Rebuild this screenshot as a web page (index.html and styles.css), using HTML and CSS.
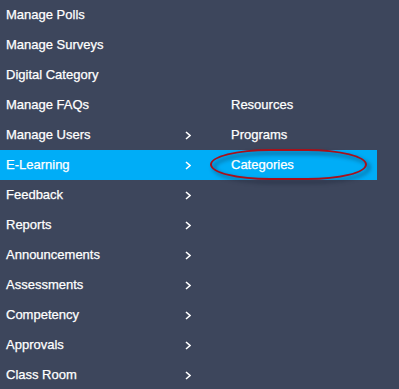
FILE: index.html
```html
<!DOCTYPE html>
<html>
<head>
<meta charset="utf-8">
<link rel="stylesheet" href="styles.css">
</head>
<body>
<div class="nav">
  <ul class="menu">
    <li class="item"><span>Manage Polls</span></li>
    <li class="item"><span>Manage Surveys</span></li>
    <li class="item"><span>Digital Category</span></li>
    <li class="item"><span>Manage FAQs</span></li>
    <li class="item"><span>Manage Users</span><svg class="chev" viewBox="0 0 6 9"><path d="M1 1 L5 4.5 L1 8"/></svg></li>
    <li class="item active"><span>E-Learning</span><svg class="chev" viewBox="0 0 6 9"><path d="M1 1 L5 4.5 L1 8"/></svg></li>
    <li class="item"><span>Feedback</span><svg class="chev" viewBox="0 0 6 9"><path d="M1 1 L5 4.5 L1 8"/></svg></li>
    <li class="item"><span>Reports</span><svg class="chev" viewBox="0 0 6 9"><path d="M1 1 L5 4.5 L1 8"/></svg></li>
    <li class="item"><span>Announcements</span><svg class="chev" viewBox="0 0 6 9"><path d="M1 1 L5 4.5 L1 8"/></svg></li>
    <li class="item"><span>Assessments</span><svg class="chev" viewBox="0 0 6 9"><path d="M1 1 L5 4.5 L1 8"/></svg></li>
    <li class="item"><span>Competency</span><svg class="chev" viewBox="0 0 6 9"><path d="M1 1 L5 4.5 L1 8"/></svg></li>
    <li class="item"><span>Approvals</span><svg class="chev" viewBox="0 0 6 9"><path d="M1 1 L5 4.5 L1 8"/></svg></li>
    <li class="item"><span>Class Room</span><svg class="chev" viewBox="0 0 6 9"><path d="M1 1 L5 4.5 L1 8"/></svg></li>
  </ul>
  <ul class="submenu">
    <li class="subitem"><span>Resources</span></li>
    <li class="subitem"><span>Programs</span></li>
    <li class="subitem active"><span>Categories</span><div class="circle"></div></li>
  </ul>
</div>
</body>
</html>
```
FILE: styles.css
```css
html, body {
  margin: 0;
  padding: 0;
  background: #3d465c;
  overflow: hidden;
}
body {
  font-family: "Liberation Sans", Arial, sans-serif;
  font-size: 13px;
  color: #ffffff;
  -webkit-text-stroke: 0.25px #ffffff;
}
.nav {
  display: flex;
  align-items: flex-start;
}
.menu, .submenu {
  list-style: none;
  margin: 0;
  padding: 0;
}
.menu {
  width: 205px;
}
.item {
  height: 30px;
  box-sizing: border-box;
  display: flex;
  align-items: center;
  justify-content: space-between;
  padding: 0 14px 2px 6px;
}
.active {
  background: #00adf7;
}
.chev {
  width: 6px;
  height: 9px;
  fill: none;
  stroke: #ffffff;
  stroke-width: 1.6;
  margin-top: 2px;
}
.submenu {
  width: 172px;
  margin-top: 90px;
}
.subitem {
  position: relative;
  height: 30px;
  box-sizing: border-box;
  display: flex;
  align-items: center;
  padding: 0 0 2px 26px;
}
.circle {
  position: absolute;
  left: 5px;
  top: -1px;
  width: 153px;
  height: 27px;
  border: 2px solid #a8101a;
  border-radius: 38% / 50%;
  filter: drop-shadow(3px 3px 2px rgba(20, 30, 50, 0.7));
}
```
